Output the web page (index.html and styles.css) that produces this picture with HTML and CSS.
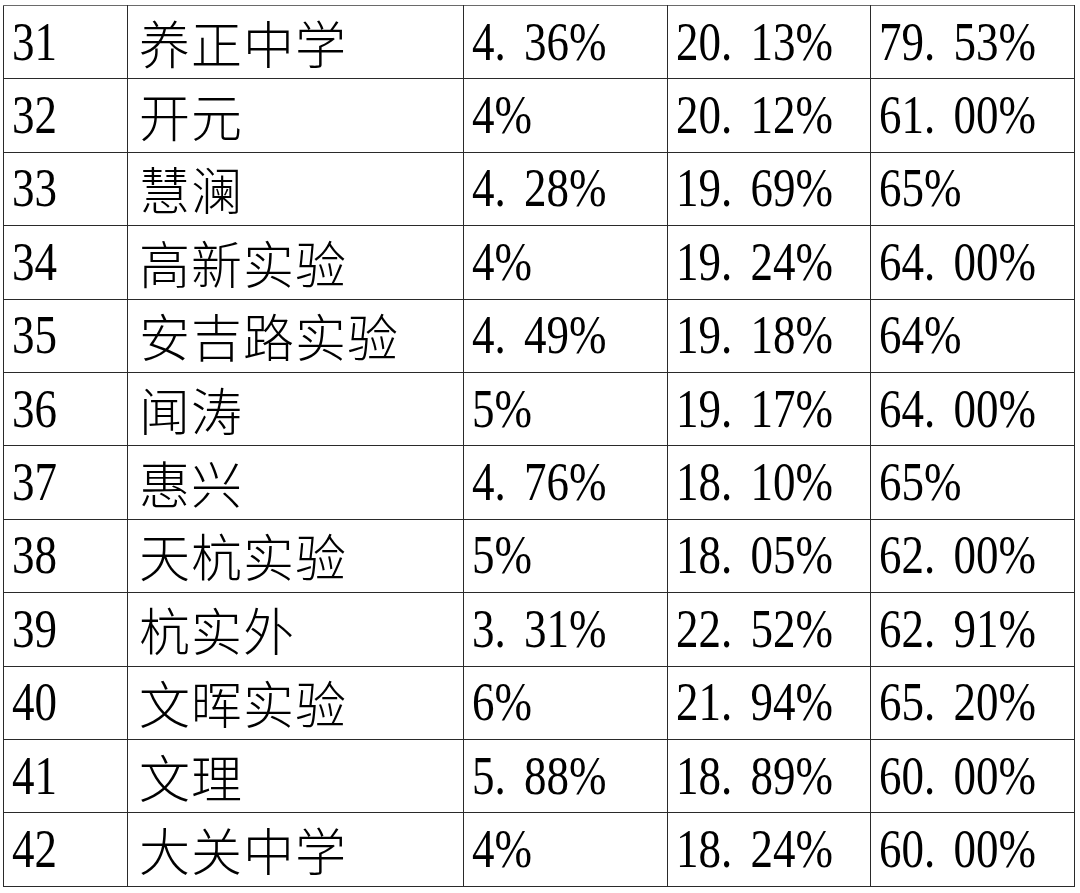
FILE: index.html
```html
<!DOCTYPE html>
<html lang="zh-CN">
<head>
<meta charset="utf-8">
<title>表格</title>
<link rel="stylesheet" href="styles.css">
</head>
<body>
<table class="grid">
  <colgroup>
    <col class="c-no"><col class="c-name"><col class="c-a"><col class="c-b"><col class="c-c">
  </colgroup>
  <tbody>
    <tr><td><span class="num">31</span></td><td class="name">养正中学</td><td><span class="num">4. 36%</span></td><td><span class="num">20. 13%</span></td><td><span class="num">79. 53%</span></td></tr>
    <tr><td><span class="num">32</span></td><td class="name">开元</td><td><span class="num">4%</span></td><td><span class="num">20. 12%</span></td><td><span class="num">61. 00%</span></td></tr>
    <tr><td><span class="num">33</span></td><td class="name">慧澜</td><td><span class="num">4. 28%</span></td><td><span class="num">19. 69%</span></td><td><span class="num">65%</span></td></tr>
    <tr><td><span class="num">34</span></td><td class="name">高新实验</td><td><span class="num">4%</span></td><td><span class="num">19. 24%</span></td><td><span class="num">64. 00%</span></td></tr>
    <tr><td><span class="num">35</span></td><td class="name">安吉路实验</td><td><span class="num">4. 49%</span></td><td><span class="num">19. 18%</span></td><td><span class="num">64%</span></td></tr>
    <tr><td><span class="num">36</span></td><td class="name">闻涛</td><td><span class="num">5%</span></td><td><span class="num">19. 17%</span></td><td><span class="num">64. 00%</span></td></tr>
    <tr><td><span class="num">37</span></td><td class="name">惠兴</td><td><span class="num">4. 76%</span></td><td><span class="num">18. 10%</span></td><td><span class="num">65%</span></td></tr>
    <tr><td><span class="num">38</span></td><td class="name">天杭实验</td><td><span class="num">5%</span></td><td><span class="num">18. 05%</span></td><td><span class="num">62. 00%</span></td></tr>
    <tr><td><span class="num">39</span></td><td class="name">杭实外</td><td><span class="num">3. 31%</span></td><td><span class="num">22. 52%</span></td><td><span class="num">62. 91%</span></td></tr>
    <tr><td><span class="num">40</span></td><td class="name">文晖实验</td><td><span class="num">6%</span></td><td><span class="num">21. 94%</span></td><td><span class="num">65. 20%</span></td></tr>
    <tr><td><span class="num">41</span></td><td class="name">文理</td><td><span class="num">5. 88%</span></td><td><span class="num">18. 89%</span></td><td><span class="num">60. 00%</span></td></tr>
    <tr><td><span class="num">42</span></td><td class="name">大关中学</td><td><span class="num">4%</span></td><td><span class="num">18. 24%</span></td><td><span class="num">60. 00%</span></td></tr>
  </tbody>
</table>
</body>
</html>
```
FILE: styles.css
```css
html, body {
  margin: 0;
  padding: 0;
  background: #ffffff;
}
body {
  padding: 5px 0 0 3px;
}
.grid {
  border-collapse: collapse;
  table-layout: fixed;
  width: 1071px;
  color: #000;
}
.c-no { width: 124px; }
.c-name { width: 336px; }
.c-a { width: 204px; }
.c-b { width: 203px; }
.c-c { width: 204px; }
.grid td {
  border: 1.5px solid #2a2a2a;
  height: 72.4px;
  padding: 0 0 0 8px;
  vertical-align: middle;
  white-space: nowrap;
  overflow: hidden;
  font-family: "Liberation Serif", "Noto Sans CJK SC", serif;
  line-height: 1;
}
.grid tr:first-child td {
  border-top-color: #6a6a6a;
}
.grid td.name {
  font-family: "Noto Sans CJK SC", sans-serif;
  font-size: 51px;
  font-weight: 300;
  padding-left: 11px;
  letter-spacing: 1px;
}
.num {
  display: inline-block;
  font-size: 45px;
  word-spacing: 7px;
  transform: scaleY(1.24);
  transform-origin: 50% 50%;
}
```
